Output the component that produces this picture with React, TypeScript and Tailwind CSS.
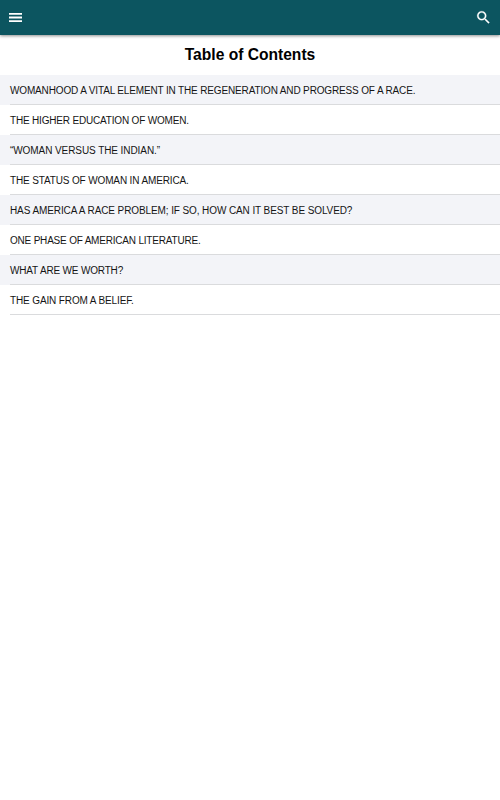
import React, { useState } from 'react';

interface Chapter {
  id: number;
  title: string;
  tracking: string;
}

const chapters: Chapter[] = [
  { id: 1, title: 'WOMANHOOD A VITAL ELEMENT IN THE REGENERATION AND PROGRESS OF A RACE.', tracking: 'tracking-[-0.15px]' },
  { id: 2, title: 'THE HIGHER EDUCATION OF WOMEN.', tracking: 'tracking-[-0.18px]' },
  { id: 3, title: '“WOMAN VERSUS THE INDIAN.”', tracking: 'tracking-[-0.08px]' },
  { id: 4, title: 'THE STATUS OF WOMAN IN AMERICA.', tracking: 'tracking-[-0.14px]' },
  { id: 5, title: 'HAS AMERICA A RACE PROBLEM; IF SO, HOW CAN IT BEST BE SOLVED?', tracking: 'tracking-[-0.1px]' },
  { id: 6, title: 'ONE PHASE OF AMERICAN LITERATURE.', tracking: 'tracking-[-0.2px]' },
  { id: 7, title: 'WHAT ARE WE WORTH?', tracking: 'tracking-[-0.17px]' },
  { id: 8, title: 'THE GAIN FROM A BELIEF.', tracking: 'tracking-[-0.13px]' },
];

const Header: React.FC = () => (
  <header className="relative flex h-[35px] items-center justify-between bg-[#0c5560] pl-[9px] pr-2 text-white shadow-[0_1px_3px_rgba(0,0,0,0.45)]">
    <button aria-label="Menu">
      <svg width="13" height="9" viewBox="0 0 13 9" fill="currentColor">
        <path d="M0 0h13v1.8H0zM0 3.6h13v1.8H0zM0 7.2h13V9H0z" />
      </svg>
    </button>
    <button aria-label="Search">
      <svg width="17" height="17" viewBox="0 0 24 24" fill="currentColor" stroke="currentColor" strokeWidth="0.3">
        <path d="M15.5 14h-.79l-.28-.27A6.471 6.471 0 0 0 16 9.5 6.5 6.5 0 1 0 9.5 16c1.61 0 3.09-.59 4.23-1.57l.27.28v.79l5 4.99L20.49 19l-4.99-5zm-6 0C7.01 14 5 11.99 5 9.5S7.01 5 9.5 5 14 7.01 14 9.5 11.99 14 9.5 14z" />
      </svg>
    </button>
  </header>
);

export default function App() {
  const [, setSelected] = useState<number | null>(null);

  return (
    <div className="min-h-screen bg-white font-['Liberation_Sans',Arial,sans-serif] text-black">
      <Header />
      <h1 className="flex h-10 items-center justify-center text-[15.6px] font-bold">Table of Contents</h1>
      <ul>
        {chapters.map((chapter) => (
          <li key={chapter.id} className="h-[30px] pl-2.5 odd:bg-[#f3f4f8]" onClick={() => setSelected(chapter.id)}>
            <div className={`flex h-full items-center border-b border-[#dadbdd] pt-px text-[10px] whitespace-nowrap text-[#151515] ${chapter.tracking}`}>
              {chapter.title}
            </div>
          </li>
        ))}
      </ul>
    </div>
  );
}
